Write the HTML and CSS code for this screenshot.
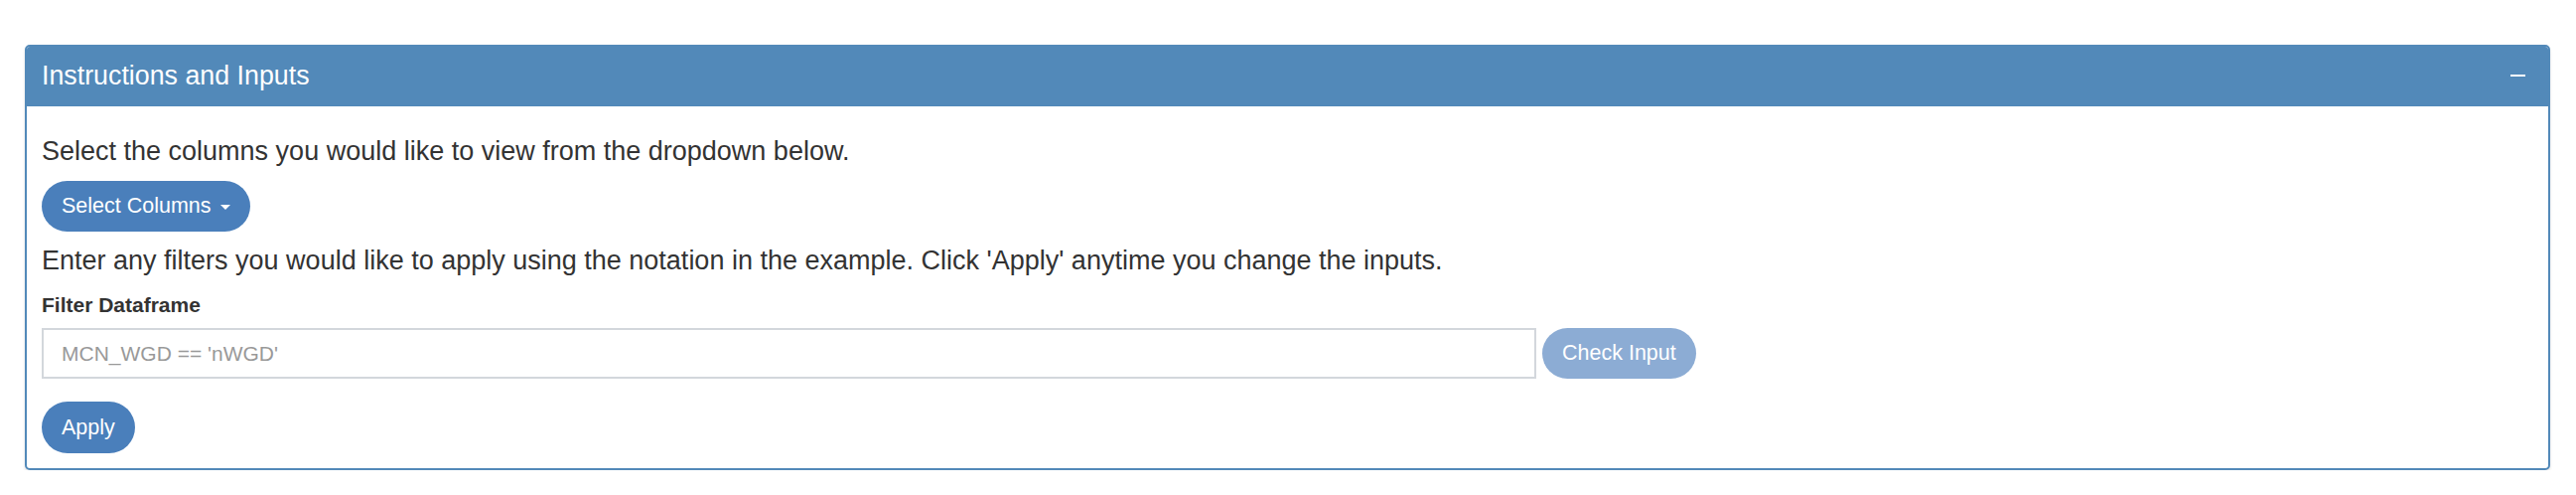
FILE: index.html
```html
<!DOCTYPE html>
<html>
<head>
<meta charset="utf-8">
<link rel="stylesheet" href="styles.css">
</head>
<body>
<div class="page">
  <div class="panel">
    <div class="panel-heading">
      <span class="panel-title">Instructions and Inputs</span>
      <span class="collapse-icon" aria-label="collapse"></span>
    </div>
    <div class="panel-body">
      <p class="text">Select the columns you would like to view from the dropdown below.</p>
      <button class="btn btn-select">Select Columns <span class="caret"></span></button>
      <p class="text text-second">Enter any filters you would like to apply using the notation in the example. Click 'Apply' anytime you change the inputs.</p>
      <label class="label">Filter Dataframe</label>
      <div class="input-row">
        <input class="input" type="text" placeholder="MCN_WGD == 'nWGD'">
        <button class="btn btn-check">Check Input</button>
      </div>
      <button class="btn btn-apply">Apply</button>
    </div>
  </div>
</div>
</body>
</html>
```
FILE: styles.css
```css
* { box-sizing: border-box; }
html, body { margin: 0; padding: 0; background: #fff; }
body {
  font-family: "Liberation Sans", Arial, Helvetica, sans-serif;
  color: #333;
}
.page {
  padding: 45px 26px 0 25px;
}
.panel {
  border: 2px solid #5289b9;
  border-radius: 5px;
  box-shadow: 0 2px 3px rgba(0,0,0,0.12);
  background: #fff;
}
.panel-heading {
  background: #5289b9;
  height: 60px;
  display: flex;
  align-items: center;
  justify-content: space-between;
  padding: 0 23px 0 15px;
  border-radius: 3px 3px 0 0;
}
.panel-title {
  color: #fff;
  font-size: 26.8px;
  line-height: 1;
  margin-top: -1px;
}
.collapse-icon {
  display: block;
  width: 15px;
  height: 2px;
  background: #fff;
  margin-top: -2px;
}
.panel-body {
  padding: 26px 15px 15px 15px;
}
.text {
  margin: 0;
  font-size: 27px;
  line-height: 38px;
}
.text-second {
  margin-top: 10px;
}
.btn {
  font-family: "Liberation Sans", Arial, Helvetica, sans-serif;
  font-size: 21.5px;
  color: #fff;
  border: none;
  border-radius: 26px;
  height: 51px;
  padding: 0 20px;
  background: #4a7fbb;
  display: flex;
  align-items: center;
  white-space: nowrap;
  cursor: pointer;
}
.btn-select {
  margin-top: 11px;
}
.caret {
  display: inline-block;
  width: 0;
  height: 0;
  margin-left: 9px;
  margin-top: 2px;
  border-top: 5px solid #fff;
  border-left: 5px solid transparent;
  border-right: 5px solid transparent;
}
.label {
  display: block;
  margin-top: 11px;
  font-size: 21px;
  font-weight: bold;
  line-height: 30px;
}
.input-row {
  display: flex;
  gap: 6px;
  margin-top: 8px;
}
.input {
  width: 1505px;
  height: 51px;
  border: 2px solid #d3d7dc;
  padding: 0 18px;
  font-family: "Liberation Sans", Arial, Helvetica, sans-serif;
  font-size: 21px;
  color: #555;
  outline: none;
}
.input::placeholder { color: #999; }
.btn-check {
  background: #8cacd4;
}
.btn-apply {
  margin-top: 23px;
  height: 52px;
}
```
